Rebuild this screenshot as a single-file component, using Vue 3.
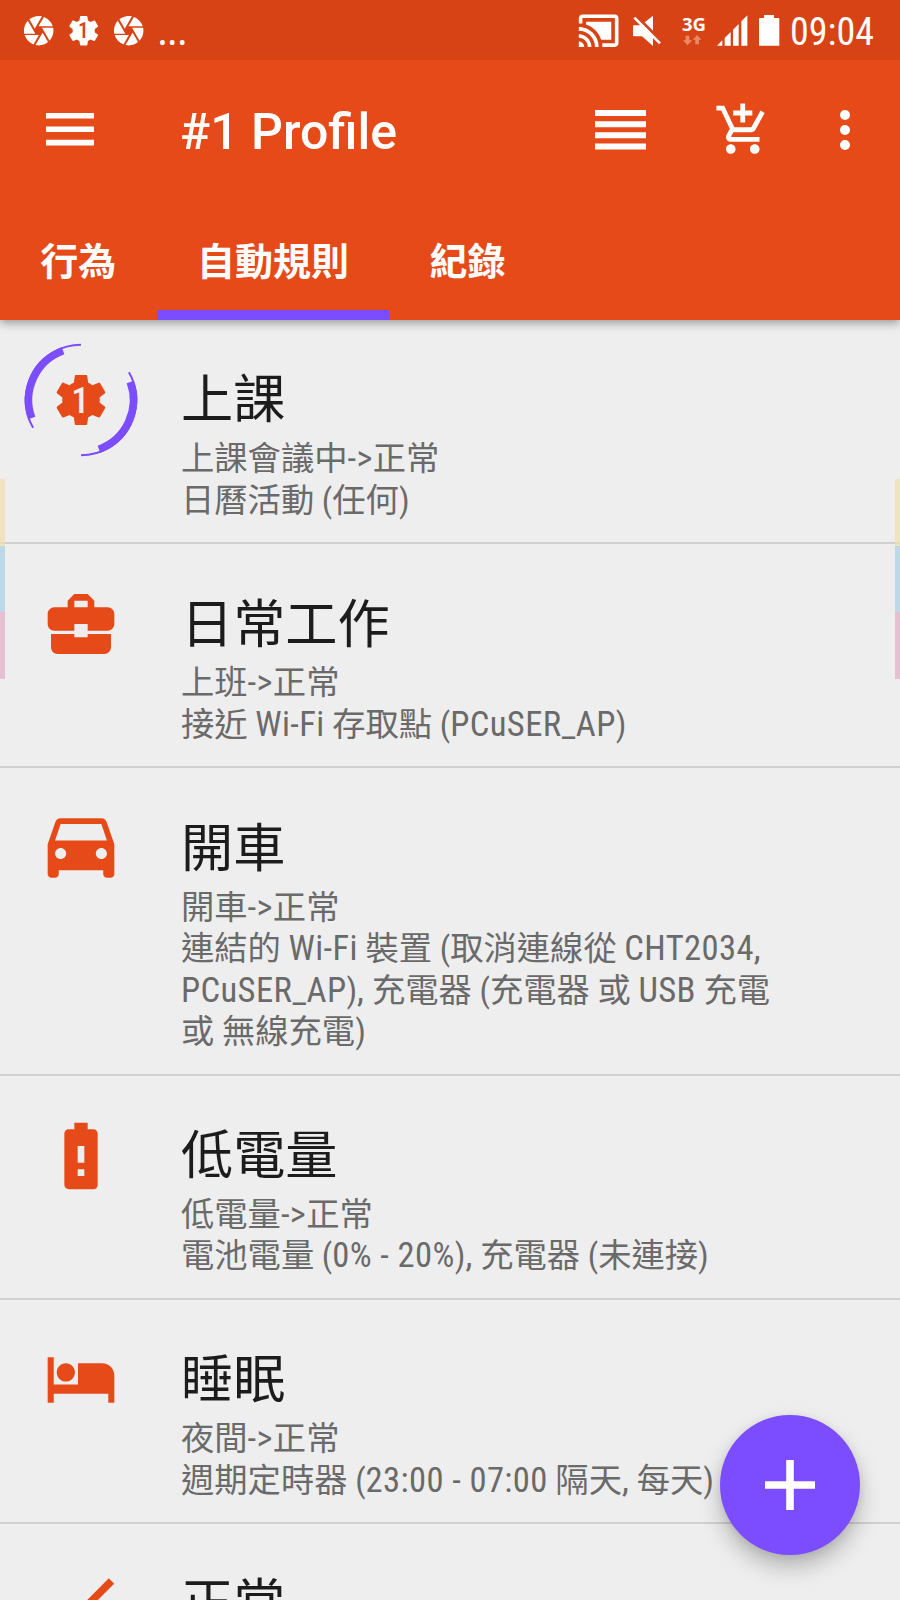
<script setup>
const gear = 'M19.43 12.98c.04-.32.07-.64.07-.98s-.03-.66-.07-.98l2.11-1.65c.19-.15.24-.42.12-.64l-2-3.46c-.12-.22-.39-.3-.61-.22l-2.49 1c-.52-.4-1.08-.73-1.69-.98l-.38-2.65C14.46 2.18 14.25 2 14 2h-4c-.25 0-.46.18-.49.42l-.38 2.65c-.61.25-1.17.59-1.69.98l-2.49-1c-.23-.09-.49 0-.61.22l-2 3.46c-.13.22-.07.49.12.64l2.11 1.65c-.04.32-.07.65-.07.98s.03.66.07.98l-2.11 1.65c-.19.15-.24.42-.12.64l2 3.46c.12.22.39.3.61.22l2.49-1c.52.4 1.08.73 1.69.98l.38 2.65c.03.24.24.42.49.42h4c.25 0 .46-.18.49-.42l.38-2.65c.61-.25 1.17-.59 1.69-.98l2.49 1c.23.09.49 0 .61-.22l2-3.46c.12-.22.07-.49-.12-.64l-2.11-1.65z'
const aperture = 'M9.4 10.5l4.77-8.26C13.47 2.09 12.75 2 12 2c-2.4 0-4.6.85-6.32 2.25l3.66 6.35.06-.1zM21.54 9c-.92-2.92-3.15-5.26-6-6.34L11.88 9h9.66zm.26 1h-7.49l.29.5 4.76 8.25C21 16.97 22 14.61 22 12c0-.69-.07-1.35-.2-2zM8.54 12l-3.9-6.75C3.01 7.03 2 9.39 2 12c0 .69.07 1.35.2 2h7.49l-1.15-2zm-6.08 3c.92 2.92 3.15 5.26 6 6.34L12.12 15H2.46zm11.27 0l-3.9 6.76c.7.15 1.42.24 2.17.24 2.4 0 4.6-.85 6.32-2.25l-3.66-6.35-.93 1.6z'

const tabs = [
  { label: '行為' },
  { label: '自動規則', active: true },
  { label: '紀錄' },
]

const rules = [
  { title: '上課', running: true, lines: ['上課會議中->正常', '日曆活動 (任何)'] },
  {
    title: '日常工作',
    box: '0 0 24 24',
    icon: 'M10 16v-1H3.01L3 19c0 1.11.89 2 2 2h14c1.11 0 2-.89 2-2v-4h-7v1h-4zm10-9h-4.01V5l-2-2h-4l-2 2v2H4c-1.1 0-2 .9-2 2v3c0 1.11.89 2 2 2h6v-2h4v2h6c1.1 0 2-.9 2-2V9c0-1.1-.9-2-2-2zm-6 0h-4V5h4v2z',
    lines: ['上班->正常', '接近 Wi-Fi 存取點 (PCuSER_AP)'],
  },
  {
    title: '開車',
    box: '1.2 1.2 21.6 21.6',
    icon: 'M18.92 5.01C18.72 4.42 18.16 4 17.5 4h-11c-.66 0-1.21.42-1.42 1.01L3 11v8c0 .55.45 1 1 1h1c.55 0 1-.45 1-1v-1h12v1c0 .55.45 1 1 1h1c.55 0 1-.45 1-1v-8l-2.08-5.99zM6.5 15c-.83 0-1.5-.67-1.5-1.5S5.67 12 6.5 12s1.5.67 1.5 1.5S7.33 15 6.5 15zm11 0c-.83 0-1.5-.67-1.5-1.5s.67-1.5 1.5-1.5 1.5.67 1.5 1.5-.67 1.5-1.5 1.5zM5 10l1.5-4.5h11L19 10H5z',
    lines: ['開車->正常', '連結的 Wi-Fi 裝置 (取消連線從 CHT2034,', 'PCuSER_AP), 充電器 (充電器 或 USB 充電', '或 無線充電)'],
  },
  {
    title: '低電量',
    box: '0 0 24 24',
    icon: 'M15.67 4H14V2h-4v2H8.33C7.6 4 7 4.6 7 5.33v15.33C7 21.4 7.6 22 8.33 22h7.33c.74 0 1.34-.6 1.34-1.33V5.33C17 4.6 16.4 4 15.67 4zM13 18h-2v-2h2v2zm0-4h-2V9h2v5z',
    lines: ['低電量->正常', '電池電量 (0% - 20%), 充電器 (未連接)'],
  },
  {
    title: '睡眠',
    box: '-1.2 -0.7 26.4 26.4',
    icon: 'M7 13c1.66 0 3-1.34 3-3S8.66 7 7 7s-3 1.34-3 3 1.34 3 3 3zm12-6h-8v7H3V5H1v15h2v-3h18v3h2v-9c0-2.21-1.79-4-4-4z',
    lines: ['夜間->正常', '週期定時器 (23:00 - 07:00 隔天, 每天)'],
  },
  {
    title: '正常',
    box: '1.7 1.8 21.1 21.1',
    icon: 'M9 16.17L4.83 12l-1.42 1.41L9 19 21 7l-1.41-1.41z',
    lines: [],
  },
]

// Splits a line so that Latin words and numbers can be set a little wider.
const latin = /([!-'*-~]+(?: [!-'*-~]+)*)/
const runs = (line) => line.split(latin).map((text, i) => ({ text, latin: i % 2 === 1 }))

const stripes = ['yellow', 'blue', 'pink']
</script>

<template>
  <div class="screen">
    <header class="top">
      <div class="status">
        <div class="notes">
          <svg class="note" viewBox="0 0 24 24"><path :d="aperture" /></svg>
          <svg class="note" viewBox="0 0 24 24">
            <path :d="gear" />
            <text class="cut" x="11.7" y="17.1" text-anchor="middle">1</text>
          </svg>
          <svg class="note" viewBox="0 0 24 24"><path :d="aperture" /></svg>
          <span class="more-notes">...</span>
        </div>
        <div class="system">
          <svg class="cast" viewBox="0 0 24 24"><path d="M1 18v3h3c0-1.66-1.34-3-3-3zm0-4v2c2.76 0 5 2.24 5 5h2c0-3.87-3.13-7-7-7zm18-7H5v1.63c3.96 1.28 7.09 4.41 8.37 8.37H19V7zM1 10v2c4.97 0 9 4.03 9 9h2c0-6.08-4.93-11-11-11zm20-7H3c-1.1 0-2 .9-2 2v3h2V5h18v14h-7v2h7c1.1 0 2-.9 2-2V5c0-1.1-.9-2-2-2z" /></svg>
          <svg class="mute" viewBox="0 0 84 90">
            <path d="M0 31Q0 28 3 28H24L60 -1V90L27 61H3Q0 61 0 58Z" />
            <path class="gap" d="M8 -1L88 79" />
            <path class="slash" d="M4 5L81 82" />
          </svg>
          <div class="network">
            <span class="gen">3G</span>
            <svg class="arrows" viewBox="0 0 56 32"><path d="M8 2h11v14h9L13.500 31 0 16h8zM37 28h11V14h8L42.500 0 29 14h8z" /></svg>
          </div>
          <svg class="signal" viewBox="0 0 92 92"><path d="M0 92L16 76V92ZM23 69L41 51V92H23ZM48 44L65 27V92H48ZM73 19L91 1V92H73Z" /></svg>
          <svg class="battery" viewBox="0 0 61 92"><path d="M15 0H45V9H58Q61 9 61 12V92H0V12Q0 9 3 9H15Z" /></svg>
          <span class="clock">09:04</span>
        </div>
      </div>

      <div class="appbar">
        <svg class="burger" viewBox="0 0 48 33"><path d="M0 0h48v5.600H0zM0 13.400h48V19H0zM0 26.800h48v5.600H0z" /></svg>
        <h1>#1 Profile</h1>
        <svg class="lines" viewBox="0 0 51 40"><path d="M0 0h51v6H0zM0 11.200h51v6H0zM0 22.300h51v6H0zM0 33.500h51v6H0z" /></svg>
        <svg class="cart" viewBox="0 0 24 24"><path d="M11 9h2V6h3V4h-3V1h-2v3H8v2h3v3zm-4 9c-1.1 0-1.99.9-1.99 2S5.900 22 7 22s2-.9 2-2-.9-2-2-2zm10 0c-1.1 0-1.99.9-1.99 2s.89 2 1.990 2 2-.9 2-2-.9-2-2-2zm-9.830-3.250l.03-.12.9-1.630h7.450c.75 0 1.410-.41 1.750-1.030l3.860-7.010L19.420 4h-.01l-1.100 2-2.760 5H8.530l-.13-.27L6.160 6l-.95-2-.94-2H1v2h2l3.600 7.590-1.350 2.450c-.16.28-.25.61-.25.96 0 1.100.9 2 2 2h12v-2H7.420c-.13 0-.25-.11-.25-.25z" /></svg>
        <svg class="dots" viewBox="0 0 10 40"><circle cx="5" cy="5" r="5" /><circle cx="5" cy="20" r="5" /><circle cx="5" cy="35" r="5" /></svg>
      </div>

      <nav class="tabs">
        <div v-for="tab in tabs" :key="tab.label" class="tab" :class="{ active: tab.active }">{{ tab.label }}</div>
      </nav>
    </header>

    <main class="list">
      <section v-for="rule in rules" :key="rule.title" class="rule">
        <div class="lead">
          <svg v-if="rule.running" class="running" viewBox="-60 -60 120 120">
            <g v-for="turn in [0, 180]" :key="turn" :transform="`rotate(${turn})`">
              <circle class="thin" r="55.3" pathLength="360" transform="rotate(-30)" />
              <circle class="thick" r="52.4" pathLength="360" transform="rotate(-20)" />
            </g>
            <g transform="translate(-30 -30) scale(2.5)">
              <path :d="gear" />
              <text class="cut light" x="11.7" y="17.1" text-anchor="middle">1</text>
            </g>
          </svg>
          <svg v-else class="icon" :viewBox="rule.box"><path :d="rule.icon" /></svg>
        </div>
        <div class="text">
          <h2>{{ rule.title }}</h2>
          <p v-for="line in rule.lines" :key="line"><span v-for="(run, i) in runs(line)" :key="i" :class="{ latin: run.latin }">{{ run.text }}</span></p>
        </div>
      </section>
    </main>

    <div v-for="side in ['left', 'right']" :key="side" class="edge" :class="side">
      <i v-for="s in stripes" :key="s" :class="s"></i>
    </div>

    <button class="fab" aria-label="add">
      <svg viewBox="0 0 50 50"><path d="M21.200 0h7.600v21.200H50v7.600H28.800V50h-7.600V28.800H0v-7.600h21.200z" /></svg>
    </button>
  </div>
</template>

<style>
body {
  margin: 0;
}
</style>

<style scoped>
.screen {
  position: relative;
  width: 900px;
  height: 1600px;
  overflow: hidden;
  background: #eee;
  font-family: "Roboto Condensed", Roboto, "Noto Sans CJK TC", sans-serif;
}
svg {
  display: block;
  flex: none;
  overflow: visible;
}
.top {
  position: relative;
  height: 320px;
  box-sizing: border-box;
  background: #e64a19;
  color: #fff;
  fill: #fff;
  box-shadow: 0 3px 9px rgba(0, 0, 0, 0.36);
}
.status {
  height: 60px;
  background: #d74315;
  display: flex;
  justify-content: space-between;
}
.notes,
.system {
  display: flex;
  align-items: flex-start;
}
.notes {
  padding: 12.700px 0 0 21px;
  gap: 9.600px;
}
.note {
  width: 35.400px;
  height: 35.400px;
}
.cut {
  font: 500 14.500px "Roboto Condensed", Roboto, sans-serif;
  fill: #d74315;
}
.cut.light {
  fill: #eee;
}
.more-notes {
  font: 37px/40px "Noto Sans", sans-serif;
  margin: -2px 0 0 1.500px;
}
.system {
  padding-right: 28px;
}
.cast {
  width: 43.300px;
  height: 43.300px;
  margin: 9px 12.500px 0 0;
}
.mute {
  width: 28px;
  height: 30px;
  margin: 15.500px 21.500px 0 0;
}
.mute path {
  fill: #fff;
}
.mute .gap {
  stroke: #d74315;
  stroke-width: 10;
}
.mute .slash {
  stroke: #fff;
  stroke-width: 8;
}
.network {
  width: 34.500px;
  padding-top: 14px;
}
.gen {
  display: block;
  font: 700 18.500px/20px "Noto Sans", sans-serif;
}
.arrows {
  width: 18.600px;
  height: 10.700px;
  margin: 1px 0 0 1px;
  fill: #ea8867;
}
.signal {
  width: 30.700px;
  height: 30.700px;
  margin: 15px 12px 0 0;
}
.battery {
  width: 20.300px;
  height: 30.700px;
  margin: 15px 10.500px 0 0;
}
.clock {
  font-size: 38px;
  line-height: 44px;
  font-stretch: 75%;
  margin-top: 10px;
  width: 82px;
}
.appbar {
  height: 140px;
  display: flex;
  align-items: center;
}
.burger {
  width: 48px;
  height: 33px;
  margin: -1px 0 0 46px;
}
h1 {
  flex: 1;
  margin: 4px 0 0 86px;
  font: 500 50px/60px Roboto, sans-serif;
}
.lines {
  width: 51px;
  height: 40px;
}
.cart {
  width: 57.500px;
  height: 57.500px;
  margin-left: 68px;
}
.dots {
  width: 10px;
  height: 40px;
  margin: 0 50px 0 69px;
}
.tabs {
  height: 120px;
  display: flex;
}
.tab {
  box-sizing: border-box;
  padding: 24px 40.300px 0;
  font: 700 38px/70px "Noto Sans CJK TC", sans-serif;
}
.tab.active {
  border-bottom: 10px solid #7c4dff;
}
.rule {
  display: flex;
  box-sizing: border-box;
  border-bottom: 2px solid #d0d0d0;
}
.lead {
  width: 181px;
  padding-left: 20.500px;
  box-sizing: border-box;
  fill: #e64a19;
}
.running {
  width: 120px;
  height: 120px;
  margin-top: 20px;
}
.icon {
  width: 80px;
  height: 80px;
  margin: 40px 20px;
}
.thin,
.thick {
  fill: none;
  stroke: #7c4dff;
}
.thin {
  stroke-width: 2;
  stroke-dasharray: 120 240;
}
.thick {
  stroke-width: 7.500;
  stroke-dasharray: 90 270;
}
.text {
  padding: 45.400px 0 20.800px;
  white-space: pre;
}
h2 {
  margin: 0 0 12.800px;
  font: 400 52.200px/60px "Noto Sans CJK TC", sans-serif;
  color: #1c1c1c;
}
p {
  margin: 0;
  height: 41.600px;
  font-size: 33.300px;
  line-height: 41.600px;
  font-stretch: 75%;
  color: #6a6a6a;
}
.latin {
  font-size: 34.600px;
  letter-spacing: 0.380px;
}
.edge {
  position: absolute;
  top: 479px;
  width: 5px;
}
.edge.left {
  left: 0;
}
.edge.right {
  right: 0;
}
.edge i {
  display: block;
  height: 66.600px;
}
.yellow {
  background: rgba(241, 223, 170, 0.7);
}
.blue {
  background: #bdd9e8;
}
.pink {
  background: #e6c0d0;
}
.fab {
  position: absolute;
  left: 720px;
  top: 1415px;
  width: 140px;
  height: 140px;
  padding: 45px;
  border: 0;
  border-radius: 50%;
  background: #7c4dff;
  fill: #fff;
  box-shadow: 0 12px 22px rgba(0, 0, 0, 0.24), 0 2px 8px rgba(0, 0, 0, 0.08);
}
.fab svg {
  width: 50px;
  height: 50px;
}
</style>
